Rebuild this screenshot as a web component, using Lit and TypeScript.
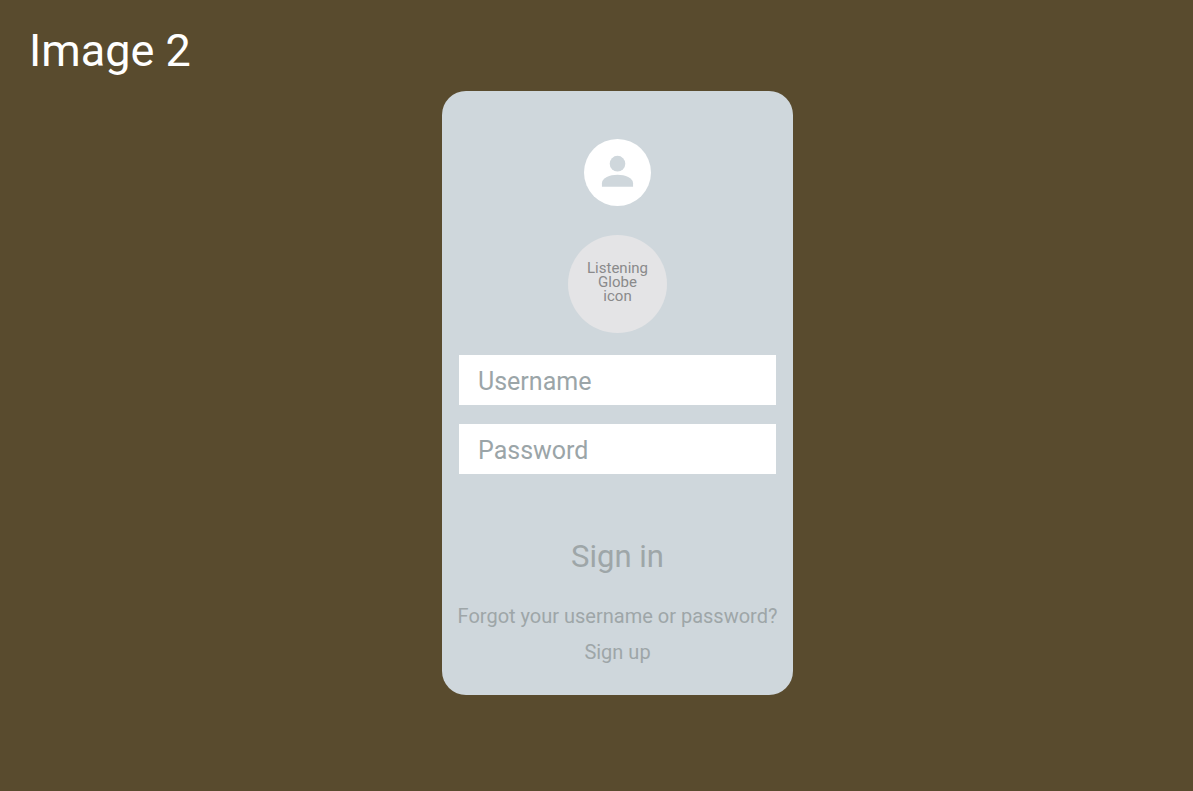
import { LitElement, html, css } from "lit";
import { customElement } from "lit/decorators.js";

@customElement("app-root")
export class AppRoot extends LitElement {
  static styles = css`
    :host {
      display: block;
      box-sizing: border-box;
      min-height: 100vh;
      padding: 24px 0 32px;
      background: #594b2e;
      font-family: Roboto, sans-serif;
    }
    * {
      box-sizing: border-box;
    }
    .title {
      margin: 0 0 14px 29px;
      font-size: 45px;
      line-height: 53px;
      font-weight: 400;
      color: #fff;
    }
    .stage {
      display: flex;
      justify-content: center;
      padding-left: 42px;
    }
    .card {
      display: flex;
      flex-direction: column;
      align-items: center;
      width: 351px;
      max-width: 100%;
      padding: 48px 17px 31px;
      border-radius: 24px;
      background: #cfd7dc;
    }
    .avatar {
      display: block;
      width: 67px;
      height: 67px;
      margin-bottom: 29px;
    }
    .globe {
      display: flex;
      align-items: center;
      justify-content: center;
      width: 99px;
      height: 98px;
      margin: 0 0 22px;
      padding-bottom: 4px;
      border-radius: 50%;
      background: #e4e4e6;
      color: #8a8a8b;
      font-size: 15px;
      line-height: 14px;
      text-align: center;
    }
    .fields {
      display: grid;
      gap: 19px;
      width: 100%;
      margin-bottom: 65px;
    }
    .field {
      display: block;
      width: 100%;
      height: 50px;
      padding: 2px 19px 0;
      border: 0;
      border-radius: 0;
      background: #fff;
      color: #9ba5a8;
      font: 400 25px/30px Roboto, sans-serif;
    }
    .field::placeholder {
      color: #9ba5a8;
      opacity: 1;
    }
    .submit {
      padding: 0;
      border: 0;
      background: none;
      color: #9ea6a8;
      font: 400 31px/36px Roboto, sans-serif;
      margin-bottom: 29px;
      cursor: pointer;
    }
    .link {
      color: #9ea6a8;
      font-size: 20px;
      line-height: 24px;
      text-decoration: none;
      white-space: nowrap;
    }
    .link + .link {
      margin-top: 12px;
    }
  `;

  render() {
    return html`
      <h1 class="title">Image 2</h1>
      <main class="stage">
        <form class="card" @submit=${(e: Event) => e.preventDefault()}>
          <svg class="avatar" viewBox="0 0 68 68" aria-hidden="true">
            <circle cx="34" cy="34" r="34" fill="#fff" />
            <circle cx="34" cy="25" r="7.9" fill="#cfd7dc" />
            <path d="M18.2 48.4v-3.4c0-5.4 8-8.6 15.8-8.6s15.8 3.2 15.8 8.6v3.4z" fill="#cfd7dc" />
          </svg>
          <p class="globe">Listening<br />Globe<br />icon</p>
          <div class="fields">
            <input class="field" type="text" name="username" placeholder="Username" aria-label="Username" autocomplete="username" />
            <input class="field" type="password" name="password" placeholder="Password" aria-label="Password" autocomplete="current-password" />
          </div>
          <button class="submit" type="submit">Sign in</button>
          <a class="link" href="#recover">Forgot your username or password?</a>
          <a class="link" href="#signup">Sign up</a>
        </form>
      </main>
    `;
  }
}
